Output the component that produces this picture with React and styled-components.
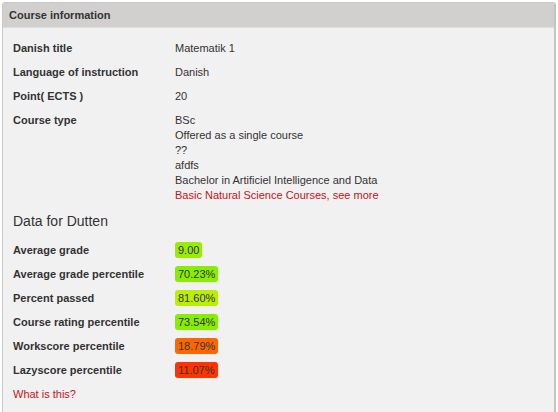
import React from "react";
import styled, { createGlobalStyle } from "styled-components";

const Global = createGlobalStyle`
  html, body { margin: 0; padding: 0; background: #ffffff; }
  body { font-family: "Liberation Sans", Arial, sans-serif; color: #333; }
`;

const Page = styled.div`
  padding: 2px 0 0 2px;
  width: 556px;
  box-sizing: border-box;
`;

const Panel = styled.section`
  border: 1px solid #c8c8c8;
  border-right: 2px solid #c4c4c4;
  border-radius: 3px 3px 0 0;
  background: #f1f1f1;
  height: 420px;
  box-sizing: border-box;
`;

const Header = styled.header`
  background: #d1d0ce;
  height: 24px;
  display: flex;
  align-items: center;
  padding: 0 6px;
  font-size: 11px;
  font-weight: bold;
  color: #333;
  border-bottom: 1px solid #dcdcdc;
  border-radius: 2px 2px 0 0;
`;

const Body = styled.div`
  padding: 13px 10px 0 10px;
`;

const Grid = styled.div`
  display: grid;
  grid-template-columns: 162px 1fr;
  row-gap: ${(p) => p.$gap}px;
  font-size: 11px;
  line-height: 15px;
`;

const Label = styled.div`
  font-weight: bold;
  color: #333;
  display: flex;
  align-items: center;
  align-self: start;
  height: ${(p) => (p.$tall ? 16 : 15)}px;
`;

const Value = styled.div`
  color: #333;
  display: flex;
  flex-direction: column;
  align-items: flex-start;
`;

const Link = styled.a`
  color: #c0141c;
  text-decoration: none;
  font-size: 11px;
  line-height: 15px;
`;

const Heading = styled.h3`
  margin: 9px 0 12px;
  font-size: 14px;
  font-weight: normal;
  line-height: 18px;
  color: #333;
`;

const Badge = styled.span`
  display: inline-block;
  background: ${(p) => p.$bg};
  border-radius: 3px;
  padding: 0 3px;
  line-height: 16px;
  height: 16px;
  color: #333;
`;

const Footer = styled.div`
  margin-top: 6px;
`;

const info = [
  ["Danish title", ["Matematik 1"]],
  ["Language of instruction", ["Danish"]],
  ["Point( ECTS )", ["20"]],
];

const courseTypes = [
  "BSc",
  "Offered as a single course",
  "??",
  "afdfs",
  "Bachelor in Artificiel Intelligence and Data",
];

const stats = [
  ["Average grade", "9.00", "#99ee00"],
  ["Average grade percentile", "70.23%", "#88ee00"],
  ["Percent passed", "81.60%", "#bbee00"],
  ["Course rating percentile", "73.54%", "#88ee00"],
  ["Workscore percentile", "18.79%", "#ff6600"],
  ["Lazyscore percentile", "11.07%", "#ff3300"],
];

export default function App() {
  return (
    <>
      <Global />
      <Page>
        <Panel>
          <Header>Course information</Header>
          <Body>
            <Grid $gap={9}>
              {info.map(([l, v]) => (
                <React.Fragment key={l}>
                  <Label>{l}</Label>
                  <Value>
                    {v.map((x) => (
                      <span key={x}>{x}</span>
                    ))}
                  </Value>
                </React.Fragment>
              ))}
              <Label>Course type</Label>
              <Value>
                {courseTypes.map((x) => (
                  <span key={x}>{x}</span>
                ))}
                <Link href="#">Basic Natural Science Courses, see more</Link>
              </Value>
            </Grid>
            <Heading>Data for Dutten</Heading>
            <Grid $gap={8}>
              {stats.map(([l, v, c]) => (
                <React.Fragment key={l}>
                  <Label $tall>{l}</Label>
                  <Value>
                    <Badge $bg={c}>{v}</Badge>
                  </Value>
                </React.Fragment>
              ))}
            </Grid>
            <Footer>
              <Link href="#">What is this?</Link>
            </Footer>
          </Body>
        </Panel>
      </Page>
    </>
  );
}
